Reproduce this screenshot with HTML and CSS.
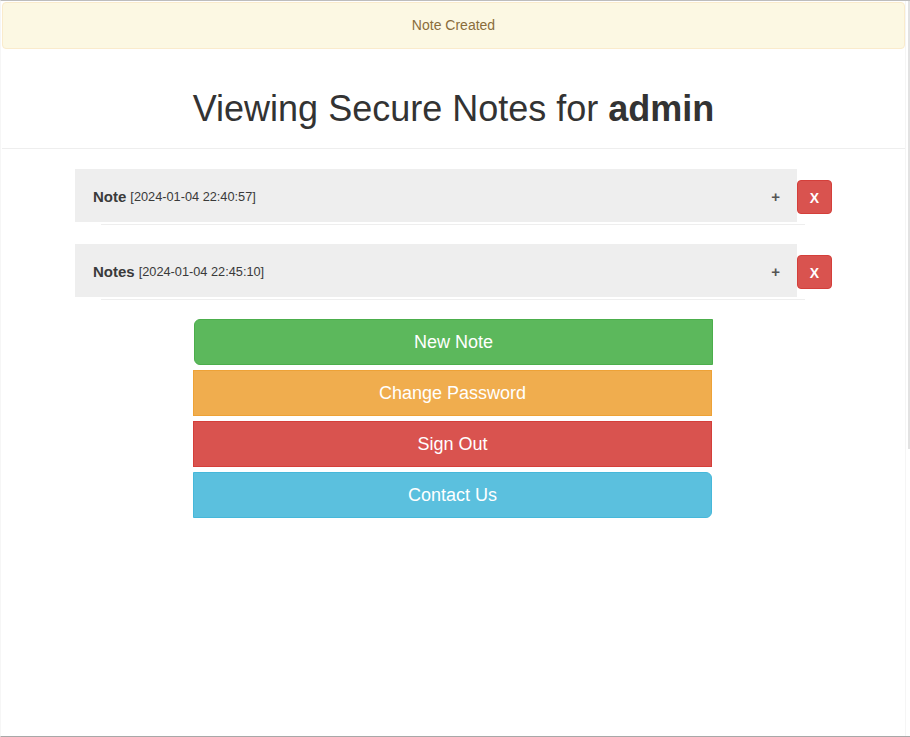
FILE: index.html
```html
<!DOCTYPE html>
<html>
<head>
<meta charset="utf-8">
<link rel="stylesheet" href="styles.css">
</head>
<body>
<div class="frame">
  <div class="page">
    <div class="alert">Note Created</div>
    <h1 class="title">Viewing Secure Notes for <b>admin</b></h1>
    <hr class="rule">
    <div class="notes">
      <div class="note">
        <div class="note-row">
          <div class="panel">
            <span class="name">Note</span> <span class="stamp">[2024-01-04 22:40:57]</span>
            <span class="plus">+</span>
          </div>
          <button class="del">X</button>
        </div>
        <div class="underline"></div>
      </div>
      <div class="note">
        <div class="note-row">
          <div class="panel">
            <span class="name">Notes</span> <span class="stamp">[2024-01-04 22:45:10]</span>
            <span class="plus">+</span>
          </div>
          <button class="del">X</button>
        </div>
        <div class="underline"></div>
      </div>
    </div>
    <div class="actions">
      <button class="btn green">New Note</button>
      <button class="btn orange">Change Password</button>
      <button class="btn red">Sign Out</button>
      <button class="btn blue">Contact Us</button>
    </div>
  </div>
  <div class="edge"></div>
  <div class="scroll"></div>
</div>
</body>
</html>
```
FILE: styles.css
```css
* { box-sizing: border-box; }
html, body { margin: 0; padding: 0; background: #fff; }
body { font-family: "Liberation Sans", Arial, sans-serif; color: #333; font-size: 14px; }
.frame {
  position: relative;
  width: 910px;
  height: 737px;
  border-top: 1px solid #bdbdbd;
  border-bottom: 1px solid #a8a8a8;
  border-left: 1px solid #f6f6f6;
  overflow: hidden;
}
.page {
  width: 903px;
  margin-left: 1px;
}
.edge {
  position: absolute;
  left: 904px;
  top: 0;
  bottom: 0;
  width: 1px;
  background: #f5f5f5;
}
.scroll {
  position: absolute;
  left: 907px;
  top: 0;
  width: 3px;
  height: 448px;
  background: #e2e2e2;
}
.alert {
  margin-top: 1px;
  height: 47px;
  background: #fcf8e3;
  border: 1px solid #faebcc;
  border-radius: 4px;
  color: #8a6d3b;
  text-align: center;
  line-height: 20px;
  padding: 12px 0;
}
.title {
  margin: 40px 0 0;
  font-size: 36px;
  font-weight: 400;
  line-height: 40px;
  text-align: center;
  color: #333;
}
.title b { font-weight: 700; }
.rule {
  margin: 19px 0 0;
  border: 0;
  border-top: 1px solid #eee;
  height: 0;
}
.notes {
  width: 757px;
  margin: 20px auto 0;
  display: flex;
  flex-direction: column;
  gap: 19px;
}
.note-row {
  display: flex;
  align-items: flex-start;
}
.panel {
  flex: 1;
  height: 53px;
  background: #eee;
  display: flex;
  align-items: center;
  padding: 2px 18px 0;
  font-size: 15px;
  color: #3a3a3a;
}
.name { font-weight: 700; }
.stamp { font-size: 12.75px; margin-left: 4px; }
.plus {
  margin-left: auto;
  color: #555;
  font-weight: 700;
  font-size: 15px;
  margin-right: -1px;
}
.del {
  width: 35px;
  height: 34px;
  margin-top: 11px;
  background: #d9534f;
  border: 1px solid #d43f3a;
  border-radius: 4px;
  color: #fff;
  font-family: "Liberation Sans", Arial, sans-serif;
  font-weight: 700;
  font-size: 14px;
  padding: 1px 0 0;
}
.underline {
  margin: 2px 27px 0 26px;
  height: 1px;
  background: #eee;
}
.actions {
  width: 520px;
  margin: 19px 0 0 191px;
  display: flex;
  flex-direction: column;
  gap: 5px;
}
.btn {
  height: 46px;
  width: 519px;
  border: 1px solid;
  color: #fff;
  font-family: "Liberation Sans", Arial, sans-serif;
  font-size: 18px;
  padding: 0;
  border-radius: 0;
}
.green { background: #5cb85c; border-color: #4cae4c; margin-left: 1px; border-radius: 6px 0 0 6px; }
.orange { background: #f0ad4e; border-color: #eea236; }
.red { background: #d9534f; border-color: #d43f3a; }
.blue { background: #5bc0de; border-color: #46b8da; border-radius: 0 6px 6px 0; }
```
